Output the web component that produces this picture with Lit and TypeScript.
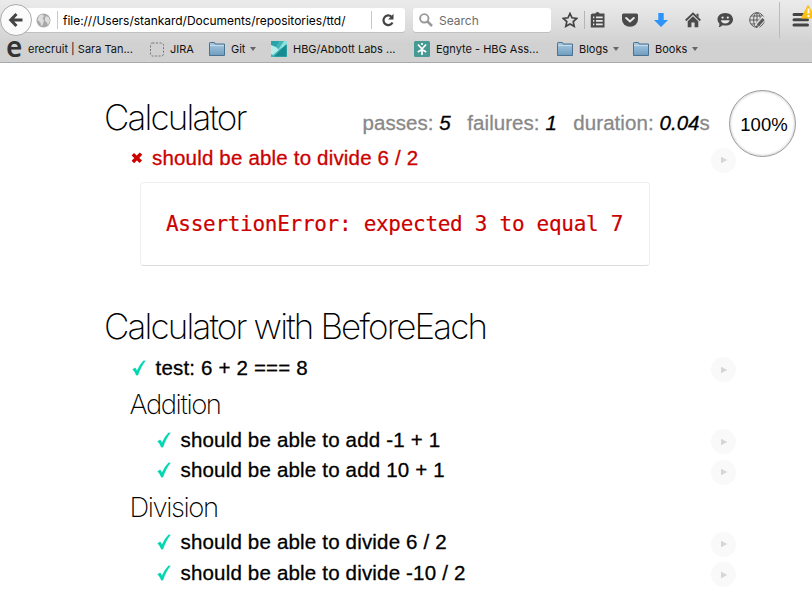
import { LitElement, html, svg, css } from "lit";
import { customElement, property } from "lit/decorators.js";

const check = html`<svg class="mark" width="14" height="16" viewBox="0 0 14 16"><path d="M.5 9.300 3.200 7.800Q4.200 9 4.900 10.800 7.500 4.500 11.500.7L13.500.8Q9 6.500 6 15.200H4.200Q2.800 11.500.5 9.300Z" fill="#00d6b2" stroke="#00d6b2" stroke-width=".2"/></svg>`;
const cross = html`<svg class="mark cross" width="12" height="12" viewBox="0 0 12 12"><path d="M1.800 2.200 9.800 9.800M10 1.600 1.900 10" stroke="#c00" stroke-width="3.500" fill="none"/></svg>`;
const folder = html`<svg width="16" height="16" viewBox="0 0 16 16"><defs><linearGradient id="f" x2="0" y2="1"><stop stop-color="#a9cbe2"/><stop offset="1" stop-color="#6f9dbf"/></linearGradient></defs><path d="M.5 14.500V2.200Q.5 1.500 1.200 1.500H5.200Q6 1.500 6.100 3H15.500V14.500Z" fill="url(#f)" stroke="#4a718f"/><path d="M1 4.500H15" stroke="#c4dcec"/></svg>`;

const toolIcons = [
  svg`<path d="M2.500 1.500H5.300Q5.600 0 7.500 0T9.700 1.500H14.500V15.500H.8V2.500Z" fill="#4a4a4a"/><path d="M3 5.300H4.300M6 5.300H12.700M3 8.800H4.300M6 8.800H12.700M3 12.300H4.300M6 12.300H12.700" stroke="#e6e6e6" stroke-width="1.700"/>`,
  svg`<path d="M1.500 1.500H14.500Q16 1.500 16 3V7.500A8 7.300 0 0 1 0 7.500V3Q0 1.500 1.500 1.500Z" fill="#4a4a4a"/><path d="M4.200 6 8 9.500 11.800 6" fill="none" stroke="#e8e8e8" stroke-width="2" stroke-linecap="round"/>`,
  svg`<path d="M5.300 1H10.700V8H15L8 15 1 8H5.300Z" fill="#2d94fa"/>`,
  svg`<path d="M.7 8.500 8 1.500 15.300 8.500" fill="none" stroke="#4a4a4a" stroke-width="1.800"/><path d="M11.500 1.700H13.500V5.500L11.500 3.600ZM8 4.200 13.300 9.200V15.200H9.600V10.500H6.400V15.200H2.700V9.200Z" fill="#4a4a4a"/>`,
  svg`<path d="M8.300 1C12.800 1 16 3.800 16 7.400S12.800 13.600 8.300 13.600Q6.800 13.600 5.500 13.200 4.300 14.800 1.700 15.200 2.600 13.600 2.400 11.500.5 9.800.5 7.400C.5 3.800 3.800 1 8.300 1Z" fill="#4a4a4a"/><circle cx="5.600" cy="5.600" r="1.150" fill="#e6e6e6"/><circle cx="10.800" cy="5.600" r="1.150" fill="#e6e6e6"/><path d="M3.800 8.200H12.700Q11.500 11.500 8.200 11.500T3.800 8.200Z" fill="#e6e6e6"/>`,
  svg`<g fill="none" stroke="#5b5b5b"><circle cx="8" cy="8" r="7.300"/><ellipse cx="8" cy="8" rx="3.400" ry="7.300"/><path d="M8 .7V15M.7 8H15M2 4H14M2 12H8"/><path d="M15.500 5.500 7.500 14.500" stroke="#e2e2e2" stroke-width="5"/><path d="M14.500 7 9 13.200" stroke-width="3"/><path d="M9 12 7 15 10.500 13.500" stroke-width="1"/></g>`,
];

@customElement("browser-chrome")
class BrowserChrome extends LitElement {
  static styles = css`
    :host { display: block; box-sizing: border-box; height: 63px; color: #111;
      font-family: Inter, "Liberation Sans", sans-serif; border-bottom: 1px solid #a9a9a9;
      background: linear-gradient(#ebebeb, #e6e6e6 10px, #d1d1d1 44px, #d1d1d1); }
    svg { display: block; flex: none; }
    .nav { display: flex; align-items: center; height: 40px; }
    .back { flex: none; width: 30px; height: 30px; border-radius: 50%; border: 1px solid #aaa; background: #fbfbfb;
      display: grid; place-items: center; z-index: 1; }
    .url { display: flex; align-items: center; box-sizing: border-box; width: 381px; height: 24px; margin-left: -8px; padding-left: 12px;
      background: #fff; border-radius: 3px; box-shadow: 0 1px #c0c0c0; font-size: 12px; white-space: nowrap; color: #000; }
    .sep { width: 1px; height: 18px; background: #c9c9c9; flex: none; }
    .first { margin-left: 6px; }
    .address { flex: 1; margin-left: 5px; letter-spacing: -.030px; }
    .reload { margin: 0 10px 0 9px; }
    .search { display: flex; align-items: center; box-sizing: border-box; width: 138px; height: 24px; margin-left: 8px; padding-left: 6px; gap: 6px;
      background: #fff; border-radius: 3px; box-shadow: 0 1px #c0c0c0; font-size: 12px; color: #6b6b6b; }
    .star { margin: 0 6px 0 11px; }
    .tool { flex: none; width: 31.800px; display: grid; place-items: center; }
    .tall { height: 36px; margin: 0 12px 0 6px; background: #bcbcbc; }
    .dim { background: #b5b5b5; margin-right: -3px; }
    .marks { display: grid; grid-template-columns: 143px 60px 62px 143px 143px 76px 1fr; height: 18px; padding-left: 6px; font-size: 11px; }
    .mark { display: flex; align-items: center; white-space: nowrap; gap: 6px; }
    .e { width: 18px; height: 40px; margin: -17px -2px -11px 0; font: 600 28px/40px "Noto Sans", sans-serif; color: #333; }
    .caret { border: 3.500px solid transparent; border-top: 4px solid #666; border-bottom: 0; margin-left: -1px; }
  `;
  render() {
    return html`
      <div class="nav">
        <div class="back"><svg width="16" height="16" viewBox="0 0 16 16"><path d="M8.500 2 2.700 8 8.500 14M3 8H14.500" fill="none" stroke="#444" stroke-width="3"/></svg></div>
        <div class="url">
          <svg width="15" height="15" viewBox="0 0 15 15"><circle cx="7.500" cy="7.500" r="7" fill="#a9a9a9"/><path d="M3 3 6 1.200 8 3 6.500 5.500 8 7.500 6.500 12 5 13 4.500 9.500 1.500 7ZM10 3 13 4.500 14 8 12 12 10.500 9 9 8 9 5Z" fill="#dedede"/></svg>
          <div class="sep first"></div>
          <span class="address">file:///Users/stankard/Documents/repositories/ttd/</span>
          <div class="sep"></div>
          <svg class="reload" width="14" height="14" viewBox="0 0 14 14"><path d="M11.500 9.500A4.800 4.800 0 1 1 10.500 3.700" fill="none" stroke="#444" stroke-width="2.200"/><path d="M12.500.8V6.500H7.200Z" fill="#444"/></svg>
        </div>
        <div class="search"><svg width="14" height="14" viewBox="0 0 14 14"><circle cx="5.300" cy="5.300" r="4.200" fill="none" stroke="#999" stroke-width="1.900"/><path d="M8.500 8.500 13 13" stroke="#999" stroke-width="2.500"/></svg>Search</div>
        <svg class="star" width="16" height="16" viewBox="0 0 16 16"><path d="M8 1.500 10 5.800 14.800 6.400 11.200 9.600 12.200 14.300 8 12 3.800 14.300 4.800 9.600 1.200 6.400 6 5.800Z" fill="none" stroke="#444" stroke-width="1.700"/></svg>
        <div class="sep dim"></div>
        ${toolIcons.map((i) => html`<div class="tool"><svg width="16" height="16" viewBox="0 0 16 16">${i}</svg></div>`)}
        <div class="sep tall"></div>
        <svg width="20" height="30" viewBox="0 0 20 30"><path d="M2 9.500H15.500M2 14.800H15.500M2 20H15.500" stroke="#444" stroke-width="3" stroke-linecap="round"/><path d="M16 .5 23.500 13H9.500Z" fill="#fcbf16" stroke="#fcbf16" stroke-linejoin="round"/><path d="M16.500 3.500V8.500M16.500 10V12" stroke="#fff" stroke-width="2"/></svg>
      </div>
      <div class="marks">
        <div class="mark"><span class="e">e</span>erecruit | Sara Tan...</div>
        <div class="mark"><svg width="15" height="15" viewBox="0 0 15 15"><rect x="1.500" y="1" width="13" height="13" rx="2" fill="none" stroke="#777" stroke-dasharray="2 1.500"/></svg>JIRA</div>
        <div class="mark">${folder}Git<i class="caret"></i></div>
        <div class="mark"><svg width="16" height="16" viewBox="0 0 16 16"><path d="M0 0H16V16H0Z" fill="#3fb5b5"/><path d="M0 0H8L5 6 0 5Z" fill="#2aa3a6"/><path d="M13 0H16V4L7 9Z" fill="#8fe0dc"/><path d="M0 4 5 6 8 9 2 14 0 13Z" fill="#b8eceb"/><path d="M15.500 3V15.500H3Z" fill="#178b90"/></svg>HBG/Abbott Labs ...</div>
        <div class="mark"><svg width="16" height="16" viewBox="0 0 16 16"><rect width="16" height="16" rx="1.500" fill="#459a94"/><path d="M8 8V14M8 8 4 3.500M8 8 12 3.500M8 8.500 3.800 11M8 8.500 12.200 11M8 2V4" stroke="#fff" stroke-width="1.700" fill="none"/></svg>Egnyte - HBG Ass...</div>
        <div class="mark">${folder}Blogs<i class="caret"></i></div>
        <div class="mark">${folder}Books<i class="caret"></i></div>
      </div>`;
  }
}

@customElement("test-row")
class TestRow extends LitElement {
  @property() label = "";
  @property({ type: Boolean }) failed = false;
  static styles = css`
    :host { display: flex; align-items: center; height: 30.750px; color: #000; font: 20.500px "Liberation Sans", sans-serif; -webkit-text-stroke: .3px; }
    .mark { flex: none; margin: 0 10px 0 1.500px; }
    .cross { margin: 0 9px 0 1px; }
    .failed { color: #c00; }
    .label { flex: 1; white-space: nowrap; letter-spacing: .180px; }
    .replay { width: 25px; height: 25px; margin: 4px 76px 0 0; border-radius: 50%; background: #f9f9f9; display: grid; place-items: center; }
  `;
  render() {
    return html`${this.failed ? cross : check}
      <span class="label ${this.failed ? "failed" : ""}">${this.label}</span>
      <span class="replay"><svg width="8" height="8" viewBox="0 0 8 8"><path d="M1 .8 7.300 4 1 7.200Z" fill="#d6d6d8"/></svg></span>`;
  }
}

interface Test { label: string; }
interface Suite { title: string; tests: Test[]; }

const nested: Suite[] = [
  { title: "Addition", tests: [{ label: "should be able to add -1 + 1" }, { label: "should be able to add 10 + 1" }] },
  { title: "Division", tests: [{ label: "should be able to divide 6 / 2" }, { label: "should be able to divide -10 / 2" }] },
];

@customElement("app-root")
class AppRoot extends LitElement {
  static styles = css`
    :host { display: block; height: 599px; overflow: hidden; background: #fff; color: #000; font-family: "Liberation Sans", sans-serif; }
    .report { padding: 27px 0 0 105px; }
    .top { display: flex; height: 52.800px; }
    h1, h2 { margin: 0; font-family: Inter, sans-serif; font-weight: 200; white-space: nowrap; }
    h1 { font-size: 35px; line-height: 40px; letter-spacing: -1.850px; margin: 0 0 6px -1px; }
    .top h1 { padding-top: 7px; width: 258.500px; }
    h2 { font-size: 27.500px; line-height: 41px; letter-spacing: -1.400px; padding-top: 1px; margin: 0 0 -1px -.5px; }
    .stats { display: flex; align-items: baseline; margin: 0; padding: 21px 0 0; font-size: 20.500px; line-height: 24px; color: #888; width: 366.500px; white-space: nowrap; -webkit-text-stroke: .3px; letter-spacing: .060px; }
    .stats span { margin-right: 16.500px; }
    .stats em { color: #000; }
    .progress { flex: none; box-sizing: border-box; width: 67px; height: 67px; border: 1px solid #999; box-shadow: inset 0 0 2px 1px #ddd; border-radius: 50%;
      display: grid; place-items: center; font-size: 18.500px; padding: 2px 0 0 3px; }
    .body { padding-left: 25px; }
    .error { box-sizing: border-box; width: 510px; height: 84px; margin: 8.450px 0 40.500px 10px; padding: 0 0 1px 25px; border: 1px solid #eee; border-bottom-color: #ddd; border-radius: 4px;
      color: #c00; font: 21px/82px "DejaVu Sans Mono", monospace; letter-spacing: -.290px; -webkit-text-stroke: .2px; }
  `;
  render() {
    return html`<browser-chrome></browser-chrome>
      <div class="report">
        <div class="top"><h1>Calculator</h1>
          <div class="stats"><span>passes: <em>5</em></span><span>failures: <em>1</em></span><span>duration: <em>0.04</em>s</span></div>
          <div class="progress">100%</div>
        </div>
        <div class="body"><test-row failed label="should be able to divide 6 / 2"></test-row>
          <pre class="error">AssertionError: expected 3 to equal 7</pre></div>
        <h1>Calculator with BeforeEach</h1>
        <div class="body"><test-row label="test: 6 + 2 === 8"></test-row>
          ${nested.map((s) => html`<h2>${s.title}</h2><div class="body">${s.tests.map((t) => html`<test-row label=${t.label}></test-row>`)}</div>`)}
        </div>
      </div>`;
  }
}
